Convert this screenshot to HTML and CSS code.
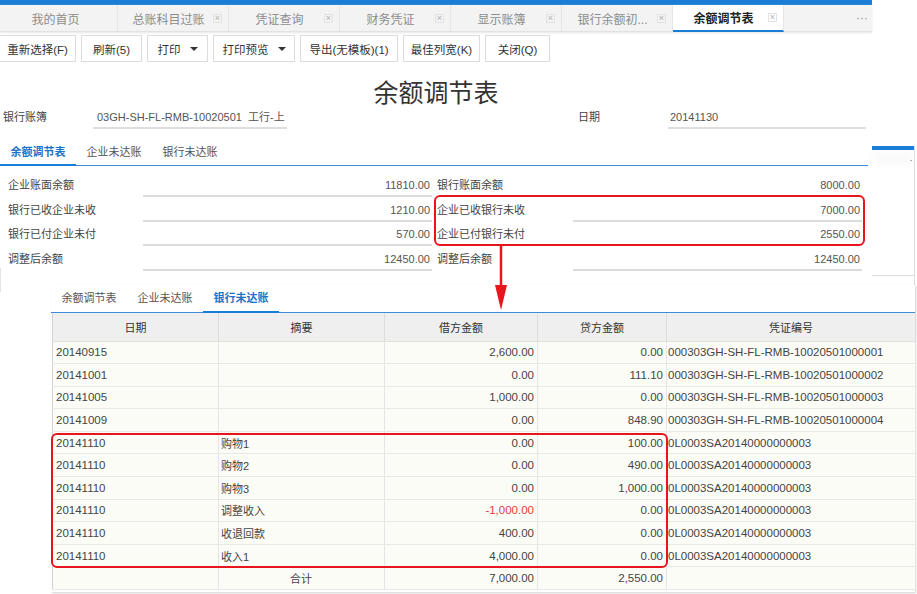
FILE: index.html
```html
<!DOCTYPE html>
<html lang="zh">
<head>
<meta charset="utf-8">
<title>余额调节表</title>
<link rel="stylesheet" href="styles.css">
</head>
<body>
<div class="app">
  <div class="topbar"></div>
  <div class="tabbar">
    <div class="tab first"><span class="tl">我的首页</span></div>
    <div class="tab"><span class="tl">总账科目过账</span><span class="xb">×</span></div>
    <div class="tab"><span class="tl">凭证查询</span><span class="xb">×</span></div>
    <div class="tab"><span class="tl">财务凭证</span><span class="xb">×</span></div>
    <div class="tab"><span class="tl">显示账簿</span><span class="xb">×</span></div>
    <div class="tab"><span class="tl">银行余额初...</span><span class="xb">×</span></div>
    <div class="tab active"><span class="tl">余额调节表</span><span class="xb">×</span></div>
    <div class="more">···</div>
  </div>
  <div class="toolbar">
    <button class="btn b1">重新选择(F)</button>
    <button class="btn b2">刷新(5)</button>
    <button class="btn b3">打印<i class="caret"></i></button>
    <button class="btn b4">打印预览<i class="caret"></i></button>
    <button class="btn b5">导出(无模板)(1)</button>
    <button class="btn b6">最佳列宽(K)</button>
    <button class="btn b7">关闭(Q)</button>
  </div>
  <h1 class="title">余额调节表</h1>
  <div class="headrow">
    <div class="hgroup">
      <span class="hlabel">银行账簿</span>
      <span class="hfield bank">03GH-SH-FL-RMB-10020501&nbsp; 工行-上</span>
    </div>
    <div class="hgroup right">
      <span class="hlabel">日期</span>
      <span class="hfield date">20141130</span>
    </div>
  </div>
  <div class="subtabs">
    <div class="stab active">余额调节表</div>
    <div class="stab">企业未达账</div>
    <div class="stab">银行未达账</div>
  </div>
  <div class="form">
    <div class="fl">企业账面余额</div><div class="fv">11810.00</div>
    <div class="fl">银行账面余额</div><div class="fv">8000.00</div>
    <div class="fl">银行已收企业未收</div><div class="fv">1210.00</div>
    <div class="fl">企业已收银行未收</div><div class="fv">7000.00</div>
    <div class="fl">银行已付企业未付</div><div class="fv">570.00</div>
    <div class="fl">企业已付银行未付</div><div class="fv">2550.00</div>
    <div class="fl">调整后余额</div><div class="fv">12450.00</div>
    <div class="fl">调整后余额</div><div class="fv">12450.00</div>
  </div>
</div>

<div class="behind">
  <div class="behind-bar"></div>
  <div class="behind-dot">·</div>
</div>
<div class="leftmark"></div>

<div class="panel">
  <div class="ptabs">
    <div class="stab">余额调节表</div>
    <div class="stab">企业未达账</div>
    <div class="stab active">银行未达账</div>
  </div>
  <table class="grid">
    <colgroup>
      <col class="c1"><col class="c2"><col class="c3"><col class="c4"><col class="c5">
    </colgroup>
    <thead>
      <tr><th>日期</th><th>摘要</th><th>借方金额</th><th>贷方金额</th><th>凭证编号</th></tr>
    </thead>
    <tbody>
      <tr><td>20140915</td><td></td><td class="n">2,600.00</td><td class="n">0.00</td><td class="v">000303GH-SH-FL-RMB-10020501000001</td></tr>
      <tr><td>20141001</td><td></td><td class="n">0.00</td><td class="n">111.10</td><td class="v">000303GH-SH-FL-RMB-10020501000002</td></tr>
      <tr><td>20141005</td><td></td><td class="n">1,000.00</td><td class="n">0.00</td><td class="v">000303GH-SH-FL-RMB-10020501000003</td></tr>
      <tr><td>20141009</td><td></td><td class="n">0.00</td><td class="n">848.90</td><td class="v">000303GH-SH-FL-RMB-10020501000004</td></tr>
      <tr><td>20141110</td><td>购物1</td><td class="n">0.00</td><td class="n">100.00</td><td class="v">0L0003SA20140000000003</td></tr>
      <tr><td>20141110</td><td>购物2</td><td class="n">0.00</td><td class="n">490.00</td><td class="v">0L0003SA20140000000003</td></tr>
      <tr><td>20141110</td><td>购物3</td><td class="n">0.00</td><td class="n">1,000.00</td><td class="v">0L0003SA20140000000003</td></tr>
      <tr><td>20141110</td><td>调整收入</td><td class="n neg">-1,000.00</td><td class="n">0.00</td><td class="v">0L0003SA20140000000003</td></tr>
      <tr><td>20141110</td><td>收退回款</td><td class="n">400.00</td><td class="n">0.00</td><td class="v">0L0003SA20140000000003</td></tr>
      <tr><td>20141110</td><td>收入1</td><td class="n">4,000.00</td><td class="n">0.00</td><td class="v">0L0003SA20140000000003</td></tr>
      <tr class="sum"><td></td><td class="c">合计</td><td class="n">7,000.00</td><td class="n">2,550.00</td><td></td></tr>
    </tbody>
  </table>
</div>

<div class="mark mark1"></div>
<svg class="arrow" width="14" height="68" viewBox="0 0 14 68">
  <line x1="7" y1="0" x2="7" y2="44" stroke="#e8151c" stroke-width="2.5"/>
  <polygon points="1,40 13,40 7,65" fill="#e8151c"/>
</svg>
<div class="mark mark2"></div>
</body>
</html>
```

FILE: styles.css
```css
* { box-sizing: border-box; }
html, body { margin: 0; padding: 0; }
body {
  width: 917px;
  height: 594px;
  overflow: hidden;
  position: relative;
  background: #fff;
  font-family: "Liberation Sans", "Noto Sans CJK SC", sans-serif;
  font-size: 11px;
  color: #444;
}
.app { width: 872px; }

.topbar { height: 5px; background: #1b7ed6; }

.tabbar {
  height: 27px;
  display: flex;
  background: #f3f3f3;
  border-bottom: 1px solid #e2e2e2;
  box-shadow: 0 1px 2px #e6e6e6;
}
.tab {
  width: 111px;
  display: flex;
  align-items: center;
  border-right: 1px solid #e6e6e6;
  font-size: 12px;
  color: #8c8c8c;
}
.tab.first { width: 118px; }
.tab .tl { flex: 1; text-align: center; padding-left: 6px; }
.tab.first .tl { padding-left: 0; padding-right: 6px; }
.xb {
  width: 9px;
  height: 9px;
  margin-right: 6px;
  border: 1px solid #e3e3e3;
  font-size: 9px;
  line-height: 7px;
  text-align: center;
  color: #b0b0b0;
}
.tab.active {
  background: #fff;
  color: #222;
  font-weight: bold;
  border-bottom: 2px solid #1b7ed6;
  height: 27px;
}
.tab.active .xb { font-weight: normal; }
.more {
  flex: 1;
  text-align: right;
  padding-right: 4px;
  line-height: 26px;
  color: #999;
  font-size: 12px;
}

.toolbar {
  display: flex;
  gap: 5px;
  margin-top: 3px;
  margin-left: -1px;
  height: 27px;
}
.btn {
  height: 27px;
  padding: 0;
  border: 1px solid #dcdcdc;
  background: #fff;
  font-family: inherit;
  font-size: 11.5px;
  color: #333;
  display: flex;
  align-items: center;
  justify-content: center;
}
.b1 { width: 77px; }
.b2 { width: 61px; }
.b3 { width: 61px; }
.b4 { width: 82px; }
.b5 { width: 98px; }
.b6 { width: 77px; }
.b7 { width: 65px; }
.caret {
  display: inline-block;
  margin-left: 9px;
  border-left: 4px solid transparent;
  border-right: 4px solid transparent;
  border-top: 4px solid #333;
}

.title {
  margin: 17px 0 0;
  height: 28px;
  line-height: 28px;
  text-align: center;
  font-size: 25px;
  font-weight: normal;
  color: #333;
}

.headrow {
  display: grid;
  grid-template-columns: 433px 433px;
  height: 22px;
}
.hgroup { display: flex; }
.hgroup.right { justify-content: flex-end; }
.hlabel {
  width: 93px;
  padding-left: 3px;
  line-height: 20px;
  color: #444;
}
.hgroup.right .hlabel { padding-left: 0; width: 90px; }
.hfield {
  height: 22px;
  line-height: 20px;
  border-bottom: 2px solid #dedede;
  padding-left: 4px;
  color: #555;
}
.hfield.bank { width: 194px; }
.hfield.date { width: 198px; padding-left: 2px; }

.subtabs {
  margin-top: 11px;
  width: 868px;
  height: 26px;
  display: flex;
  border-bottom: 1px solid #3d8ad8;
}
.stab {
  width: 76px;
  text-align: center;
  line-height: 24px;
  color: #555;
  font-size: 11px;
}
.stab.active {
  color: #1a73c8;
  font-weight: bold;
  border-bottom: 2px solid #1b7ed6;
}
.subtabs .stab.active { margin-bottom: -1px; height: 26px; }

.form {
  margin-top: 9px;
  display: grid;
  grid-template-columns: 135px 289px 141px 289px;
  row-gap: 2.5px;
  padding-left: 8px;
}
.fl { line-height: 20px; color: #444; }
.fl:nth-child(4n+3) { padding-left: 5px; }
.fv {
  height: 22px;
  line-height: 20px;
  border-bottom: 2px solid #dcdcdc;
  text-align: right;
  padding-right: 2px;
  color: #555;
}

.behind {
  position: absolute;
  left: 872px;
  top: 146px;
  width: 43px;
  height: 175px;
  border-right: 1px solid #dedede;
}
.behind-bar {
  height: 4px;
  background: #1b7ed6;
  box-shadow: 0 10px 12px #ececec;
}
.behind::after {
  content: "";
  position: absolute;
  left: 0;
  right: 0;
  top: 129px;
  border-top: 1px solid #dcdcdc;
}
.behind-dot {
  position: absolute;
  right: 1px;
  top: 8px;
  color: #888;
  font-size: 11px;
}
.leftmark {
  position: absolute;
  left: 0;
  top: 268px;
  height: 24px;
  border-left: 1px solid #e4e4e4;
}

.panel {
  position: absolute;
  left: 51px;
  top: 285px;
  width: 864px;
  height: 307px;
  background: #fff;
  box-shadow: 1px 1px 2px #cfcfcf;
}
.ptabs {
  display: flex;
  height: 28px;
  border-bottom: 1px solid #3d8ad8;
}
.ptabs .stab { line-height: 27px; }
.ptabs .stab.active { height: 28px; margin-bottom: -1px; }

.grid {
  width: 863px;
  margin-left: 1px;
  border-collapse: collapse;
  table-layout: fixed;
  font-size: 11.5px;
  background: #fcfcf6;
  border-left: 1px solid #d2d2d2;
}
.c1 { width: 166px; }
.c2 { width: 166px; }
.c3 { width: 153px; }
.c4 { width: 129px; }
.c5 { width: 249px; }
.grid th {
  height: 28px;
  background: #efefef;
  font-weight: normal;
  color: #333;
  border-right: 1px solid #dcdcdc;
  border-bottom: 1px solid #e0e0e0;
  font-size: 11px;
}
.grid td {
  height: 22.6px;
  padding: 0 3px;
  border-right: 1px solid #e6e6e6;
  border-bottom: 1px solid #e8e8e8;
  color: #444;
  white-space: nowrap;
  overflow: hidden;
}
.grid td:nth-child(2) { padding-left: 2px; font-size: 11px; }
.grid td.n { text-align: right; }
.grid td.v { padding-left: 1px; }
.grid td.c { text-align: center; }
.grid td.neg { color: #e33a3a; }

.mark {
  position: absolute;
  border: 2.5px solid #e8151c;
  border-radius: 6px;
}
.mark1 { left: 434px; top: 195px; width: 431px; height: 51px; }
.mark2 { left: 51px; top: 433px; width: 617px; height: 135px; }
.arrow { position: absolute; left: 494px; top: 245px; }
```
